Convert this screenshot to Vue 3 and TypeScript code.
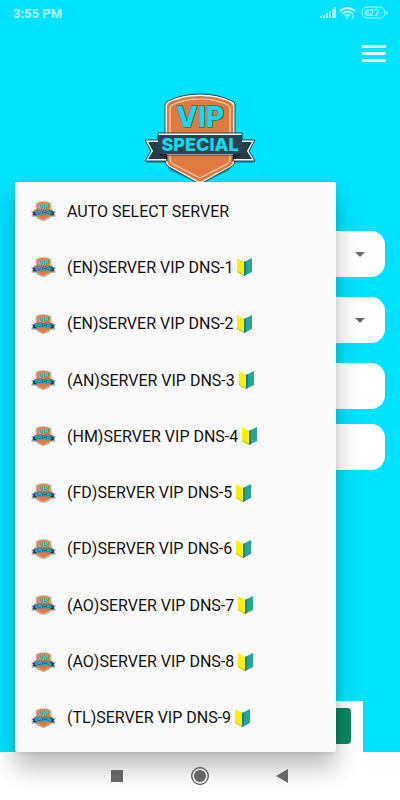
<script setup lang="ts">
import { ref } from 'vue'

interface Server {
  id: number
  name: string
  badge: boolean
}

const names: string[] = [
  'AUTO SELECT SERVER',
  '(EN)SERVER VIP DNS-1',
  '(EN)SERVER VIP DNS-2',
  '(AN)SERVER VIP DNS-3',
  '(HM)SERVER VIP DNS-4',
  '(FD)SERVER VIP DNS-5',
  '(FD)SERVER VIP DNS-6',
  '(AO)SERVER VIP DNS-7',
  '(AO)SERVER VIP DNS-8',
  '(TL)SERVER VIP DNS-9',
]
const servers: Server[] = names.map((name, id) => ({ id, name, badge: id > 0 }))

const selected = ref(0)
const username = ref('')
const password = ref('')
</script>

<template>
  <div class="screen">
    <main class="app">
      <header class="status">
        <time>3:55 PM</time>
        <svg class="signals" viewBox="0 0 70 14" aria-hidden="true">
          <path d="M3 12V10M6 12V9M9 12V7M12 12V5M15 12V3M17 12V1" stroke="#a8f6ff" stroke-width="2" />
          <g fill="none" stroke="#c2f9ff" stroke-width="2">
            <path d="M22 5Q29 -1 37 5M24 8Q29 3 35 8M27 10Q29 8 32 10" />
            <path d="M35 9V13" stroke-width="1" />
          </g>
          <circle cx="29" cy="12" r="1" fill="#c2f9ff" />
          <rect x="44" y="1" width="23" height="11" rx="5" fill="none" stroke="#a8f6ff" />
          <path d="M51 3H49Q46 4 46 6.500T49 10H51Z" fill="#60efff" />
          <path d="M69 5V9" stroke="#a8f6ff" />
          <text x="56" y="10" text-anchor="middle" class="charge">27</text>
        </svg>
      </header>

      <div class="toolbar">
        <button class="menu" type="button" aria-label="Menu"><i></i><i></i><i></i></button>
      </div>

      <svg class="logo" viewBox="0 0 112 92" role="img" aria-label="VIP Special">
        <g id="vip-logo">
          <path d="M2 48H15V41H97V48H110L104 59L110 70H87V74Q86 77 82 79L56 91L29 79Q24 77 24 74V70H2L8 59Z" fill="#17454f" opacity=".45" transform="translate(0 1)" />
          <path d="M21 13Q21 10 24 9Q38 2 56 2Q74 2 88 9Q91 10 91 13V68Q91 73 87 75L60 90Q56 92 52 90L25 75Q21 73 21 68Z" fill="#fff" stroke="#17454f" stroke-width="1" />
          <path d="M23 14Q23 12 26 10Q39 4 56 4Q73 4 86 10Q89 12 89 14V68Q89 72 86 74L58 89Q56 90 54 89L26 74Q23 72 23 68Z" fill="#e07a3f" />
          <path d="M26 16Q26 14 28 13Q40 7 56 7Q72 7 84 13Q86 14 86 16V67Q86 70 83 72L56 86L29 72Q26 70 26 67Z" fill="none" stroke="#fbe4d2" stroke-width="1" />
          <path d="M1 48H14V41H98V48H111L105 59L111 69H89V63H23V69H1L7 59Z" fill="#fff" stroke="#17454f" stroke-width="1" />
          <path d="M4 50H23V67H4L9 59ZM89 50H108L103 59L108 67H89Z" fill="#263c4d" />
          <path d="M14 62H23V68ZM98 62H89V68Z" fill="#142532" />
          <path d="M14 43H98V62H14Z" fill="#2b4254" />
          <text x="56" y="35" text-anchor="middle" class="vip">VIP</text>
          <text x="56" y="59" text-anchor="middle" class="special">SPECIAL</text>
        </g>
      </svg>

      <form class="form" @submit.prevent>
        <div class="picker">
          <select v-model="selected" class="field" aria-label="Server">
            <option v-for="s in servers" :key="s.id" :value="s.id">{{ s.name }}</option>
          </select>
          <svg class="caret" viewBox="0 0 10 5" aria-hidden="true"><path d="M0 0H10L5 5Z" fill="#6b6b6b" /></svg>
        </div>
        <div class="picker">
          <select class="field" aria-label="Network"><option></option></select>
          <svg class="caret" viewBox="0 0 10 5" aria-hidden="true"><path d="M0 0H10L5 5Z" fill="#6b6b6b" /></svg>
        </div>
        <div class="inputs">
          <input v-model="username" class="field" type="text" aria-label="Username" />
          <input v-model="password" class="field" type="password" aria-label="Password" />
        </div>
      </form>

      <div class="panel">
        <button class="connect" type="button" aria-label="Connect"></button>
      </div>

      <div class="popup" role="listbox" aria-label="Servers">
        <button
          v-for="s in servers"
          :key="s.id"
          class="row"
          type="button"
          role="option"
          :aria-selected="selected === s.id"
          @click="selected = s.id"
        >
          <svg class="mini" viewBox="0 0 112 92" aria-hidden="true"><use href="#vip-logo" /></svg>
          <span>{{ s.name }}</span>
          <svg v-if="s.badge" class="badge" viewBox="0 0 15 18" aria-hidden="true">
            <path d="M0 0L7 4V18L0 14Z" fill="#fff000" />
            <path d="M7 4L15 0V14L7 18Z" fill="#26a69a" />
            <path d="M7 4L9 3V17L7 18Z" fill="#128478" />
            <path d="M0 13L7 17V18L0 14Z" fill="#c4b52a" />
          </svg>
        </button>
      </div>
    </main>

    <nav class="nav" aria-label="System">
      <button type="button" aria-label="Recent apps">
        <svg viewBox="0 0 20 20"><path d="M4 4H16V16H4Z" fill="#666" /></svg>
      </button>
      <button type="button" aria-label="Home">
        <svg viewBox="0 0 20 20"><circle cx="10" cy="10" r="8.3" fill="none" stroke="#555" stroke-width="1.3" /><circle cx="10" cy="10" r="6" fill="#666" /></svg>
      </button>
      <button type="button" aria-label="Back">
        <svg viewBox="0 0 20 20"><path d="M3 10L15 3V17Z" fill="#666" /></svg>
      </button>
    </nav>
  </div>
</template>

<style>
body {
  margin: 0;
  background: #fff;
}
</style>

<style scoped>
.screen {
  display: flex;
  flex-direction: column;
  min-height: 100vh;
  font-family: Roboto, "Liberation Sans", sans-serif;
}
.screen * {
  box-sizing: border-box;
}
button {
  margin: 0;
  padding: 0;
  border: 0;
  background: none;
  font: inherit;
}
.vip,
.special {
  font-family: Inter, sans-serif;
  font-weight: 800;
  fill: #10dcee;
  stroke: #14505a;
  stroke-width: 1px;
  paint-order: stroke;
}
.vip {
  font-size: 28px;
}
.special {
  font-size: 18px;
}
.app {
  position: relative;
  flex: 1;
  display: flex;
  flex-direction: column;
  background: #00e3ff;
}
.status {
  display: flex;
  align-items: center;
  justify-content: space-between;
  height: 26px;
  padding: 0 12px 0 13px;
  color: #b5f8ff;
  font-size: 13px;
  font-weight: 700;
}
.signals {
  width: 70px;
  height: 14px;
}
.charge {
  font-size: 9px;
  font-weight: 700;
  fill: #c2f9ff;
}
.toolbar {
  display: flex;
  justify-content: flex-end;
  height: 66px;
  padding: 19px 14px;
}
.menu {
  display: flex;
  flex-direction: column;
  gap: 4px;
  width: 24px;
  height: 17px;
}
.menu i {
  width: 24px;
  height: 3px;
  background: #e6fdff;
}
.logo {
  width: 112px;
  height: 92px;
  margin: 0 auto;
}
.form {
  display: flex;
  flex-direction: column;
  gap: 20px;
  padding: 47px 15px 0;
}
.picker {
  display: grid;
  align-items: center;
}
.picker > * {
  grid-area: 1 / 1;
}
.inputs {
  display: flex;
  flex-direction: column;
  gap: 15px;
}
.field {
  width: 100%;
  height: 46px;
  padding: 0 16px;
  border: 0;
  border-radius: 14px;
  background: #fff;
  color: #222;
  font: inherit;
  appearance: none;
}
.caret {
  justify-self: end;
  width: 10px;
  height: 5px;
  margin-right: 20px;
  pointer-events: none;
}
.panel {
  display: flex;
  margin: auto 37px 0;
  padding: 7px 12px 8px;
  background: #fff;
}
.connect {
  flex: 1;
  height: 36px;
  border-radius: 4px;
  background: #088760;
}
.popup {
  position: absolute;
  top: 182px;
  right: 64px;
  bottom: 0;
  left: 15px;
  display: flex;
  flex-direction: column;
  padding: 1px 0 6px;
  border-radius: 2px;
  background: #fafafa;
  box-shadow: 0 16px 24px rgba(0, 0, 0, 0.26), 0 1px 4px rgba(0, 0, 0, 0.1);
}
.row {
  flex: 1;
  display: flex;
  align-items: center;
  padding: 0 16px;
  color: #111;
  font-size: 16px;
  text-align: left;
  white-space: nowrap;
}
.mini {
  width: 25px;
  height: 20px;
  margin-right: 11px;
}
.badge {
  width: 15px;
  height: 18px;
  margin-left: 4px;
}
.nav {
  display: flex;
  justify-content: center;
  align-items: center;
  gap: 63px;
  height: 48px;
}
.nav button,
.nav svg {
  position: relative;
  display: block;
  width: 20px;
  height: 20px;
}
</style>
